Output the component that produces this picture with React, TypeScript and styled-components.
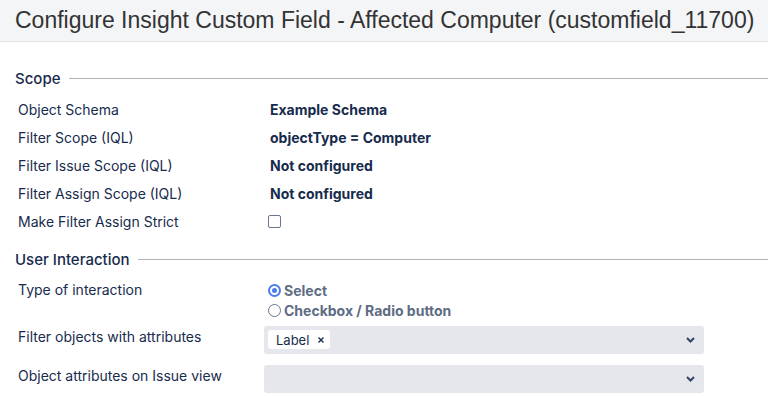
import styled, { createGlobalStyle } from "styled-components";

const GlobalStyle = createGlobalStyle`
  body {
    margin: 0;
    background: #fff;
    font-family: Inter, "Noto Sans", sans-serif;
    color: #172b4d;
  }
`;

const Header = styled.header`
  height: 41px;
  background: #f4f5f7;
  border-bottom: 1px solid #dfe1e6;
  padding: 0 15px;
  display: flex;
  align-items: center;
`;

const Title = styled.h1`
  margin: 0;
  font-family: "Liberation Sans", Arial, sans-serif;
  font-weight: 400;
  font-size: 23px;
  color: #333;
  white-space: nowrap;
`;

const Content = styled.main`
  padding: 25px 0 0 15px;
`;

const Legend = styled.div`
  display: flex;
  align-items: center;
  gap: 8px;
  font-size: 15px;
  font-weight: 500;
  color: #172b4d;
  height: 22px;

  &::after {
    content: "";
    flex: 1;
    height: 1px;
    background: #b3b3b3;
  }
`;

const Rows = styled.div<{ $top: number; $bottom: number }>`
  display: grid;
  grid-template-columns: 252px 1fr;
  padding: ${(p) => p.$top}px 0 ${(p) => p.$bottom}px 3px;
  font-size: 14px;
`;

const Label = styled.div<{ $tall?: number; $top?: boolean }>`
  height: ${(p) => p.$tall ?? 28}px;
  box-sizing: border-box;
  display: flex;
  align-items: ${(p) => (p.$top ? "flex-start" : "center")};
  padding-bottom: ${(p) => (p.$tall && !p.$top ? 7 : 0)}px;
  color: #172b4d;
`;

const Value = styled.div<{ $tall?: number; $top?: boolean }>`
  height: ${(p) => p.$tall ?? 28}px;
  display: flex;
  align-items: ${(p) => (p.$top ? "flex-start" : "center")};
  font-weight: 700;
  color: #172b4d;
`;

const Checkbox = styled.span`
  width: 11px;
  height: 11px;
  border: 1.5px solid #6b778c;
  border-radius: 2px;
  margin-left: -2px;
`;

const RadioGroup = styled.div`
  display: flex;
  flex-direction: column;
  gap: 2px;
  margin-left: -2px;
`;

const RadioRow = styled.div`
  display: flex;
  align-items: center;
  gap: 3px;
  font-weight: 700;
  color: #5e6c84;
  height: 18px;
`;

const Radio = styled.span<{ $on?: boolean }>`
  width: 13px;
  height: 13px;
  border-radius: 50%;
  box-sizing: border-box;
  border: ${(p) => (p.$on ? "2px solid #4c7bf0" : "1.5px solid #6b778c")};
  display: flex;
  align-items: center;
  justify-content: center;

  &::after {
    content: "";
    width: 5px;
    height: 5px;
    border-radius: 50%;
    background: ${(p) => (p.$on ? "#4c7bf0" : "transparent")};
  }
`;

const SelectBox = styled.div`
  margin-left: -6px;
  width: 440px;
  height: 28px;
  box-sizing: border-box;
  background: #e6e7ec;
  border-radius: 3px;
  display: flex;
  align-items: center;
  padding: 0 9px 0 4px;
`;

const Tags = styled.div`
  flex: 1;
  display: flex;
`;

const Tag = styled.span`
  background: #fff;
  border-radius: 3px;
  height: 19px;
  display: flex;
  align-items: center;
  gap: 9px;
  padding: 0 6px 0 8px;
  font-weight: 400;
  font-size: 13px;
  color: #172b4d;
`;

const Chevron = () => (
  <svg width="9" height="6" viewBox="0 0 9 6">
    <path d="M1 1 L4.5 4.5 L8 1" fill="none" stroke="#344563" strokeWidth="2" />
  </svg>
);

const Cross = () => (
  <svg width="6" height="6" viewBox="0 0 6 6">
    <path d="M0.5 0.5 L5.5 5.5 M5.5 0.5 L0.5 5.5" stroke="#172b4d" strokeWidth="1.4" />
  </svg>
);

export default function App() {
  return (
    <>
      <GlobalStyle />
      <Header>
        <Title>Configure Insight Custom Field - Affected Computer (customfield_11700)</Title>
      </Header>
      <Content>
        <Legend>Scope</Legend>
        <Rows $top={6} $bottom={13}>
          <Label>Object Schema</Label>
          <Value>Example Schema</Value>
          <Label>Filter Scope (IQL)</Label>
          <Value>objectType = Computer</Value>
          <Label>Filter Issue Scope (IQL)</Label>
          <Value>Not configured</Value>
          <Label>Filter Assign Scope (IQL)</Label>
          <Value>Not configured</Value>
          <Label>Make Filter Assign Strict</Label>
          <Value>
            <Checkbox />
          </Value>
        </Rows>
        <Legend>User Interaction</Legend>
        <Rows $top={11} $bottom={0}>
          <Label $tall={39} $top>
            Type of interaction
          </Label>
          <Value $tall={39} $top>
            <RadioGroup>
              <RadioRow>
                <Radio $on />
                Select
              </RadioRow>
              <RadioRow>
                <Radio />
                Checkbox / Radio button
              </RadioRow>
            </RadioGroup>
          </Value>
          <Label $tall={39}>Filter objects with attributes</Label>
          <Value $tall={39}>
            <SelectBox>
              <Tags>
                <Tag>
                  Label <Cross />
                </Tag>
              </Tags>
              <Chevron />
            </SelectBox>
          </Value>
          <Label $tall={39}>Object attributes on Issue view</Label>
          <Value $tall={39}>
            <SelectBox>
              <Tags />
              <Chevron />
            </SelectBox>
          </Value>
        </Rows>
      </Content>
    </>
  );
}
